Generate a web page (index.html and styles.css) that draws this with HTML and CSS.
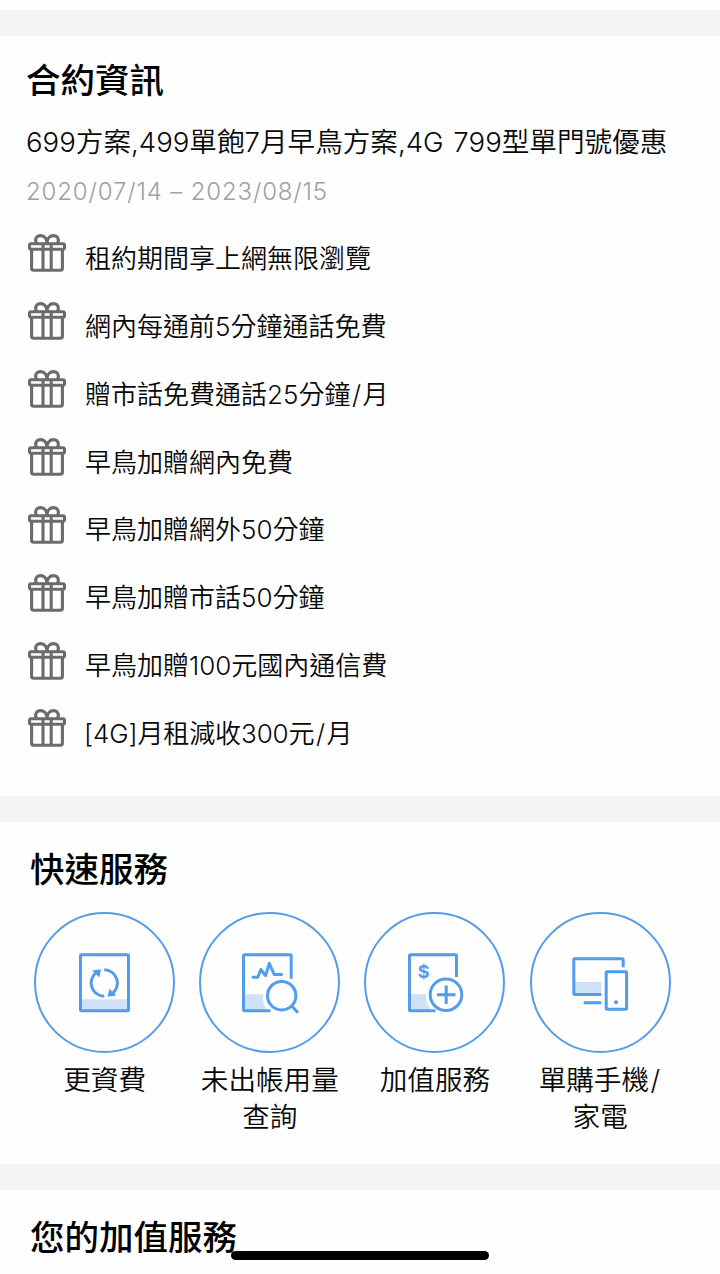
FILE: index.html
```
<!DOCTYPE html>
<html lang="zh-Hant">
<head>
<meta charset="utf-8">
<title>合約資訊</title>
<link rel="stylesheet" href="styles.css">
</head>
<body>
<svg class="defs" width="0" height="0" aria-hidden="true">
  <symbol id="gift" viewBox="0 0 38 38">
    <g fill="none" stroke="#6b6b6b" stroke-width="3.1" stroke-linejoin="round" stroke-linecap="round">
      <rect x="1.5" y="9.7" width="35" height="5.6" rx="1.6"/>
      <path d="M3.6 15.5V34.2Q3.6 36.2 5.6 36.2H32.4Q34.4 36.2 34.4 34.2V15.5M15 10V36M23.2 10V36"/>
      <path d="M8.4 9.2C6.2 4.8 9 1.6 12.8 1.6C16.8 1.6 18.8 5.2 19 9.4C19.2 5.2 21.2 1.6 25.2 1.6C29 1.6 31.8 4.8 29.6 9.2"/>
    </g>
  </symbol>
</svg>
<main class="page">
  <section class="contract">
    <h2 class="title">合約資訊</h2>
    <p class="plan">699方案,499單飽7月早鳥方案,4G <span class="price">799型單門號優惠</span></p>
    <p class="period">2020/07/14 – 2023/08/15</p>
    <ul class="benefits">
      <li class="benefit"><svg class="gift"><use href="#gift"/></svg><span>租約期間享上網無限瀏覽</span></li>
      <li class="benefit"><svg class="gift"><use href="#gift"/></svg><span>網內每通前5分鐘通話免費</span></li>
      <li class="benefit"><svg class="gift"><use href="#gift"/></svg><span>贈市話免費通話25分鐘<span class="slash">/</span>月</span></li>
      <li class="benefit"><svg class="gift"><use href="#gift"/></svg><span>早鳥加贈網內免費</span></li>
      <li class="benefit"><svg class="gift"><use href="#gift"/></svg><span>早鳥加贈網外50分鐘</span></li>
      <li class="benefit"><svg class="gift"><use href="#gift"/></svg><span>早鳥加贈市話50分鐘</span></li>
      <li class="benefit"><svg class="gift"><use href="#gift"/></svg><span>早鳥加贈100元國內通信費</span></li>
      <li class="benefit"><svg class="gift"><use href="#gift"/></svg><span class="rebate">[4G]月租減收300元<span class="slash">/</span>月</span></li>
    </ul>
  </section>
  <section class="quick">
    <h2 class="title">快速服務</h2>
    <div class="services">
      <a class="service">
        <svg class="round" viewBox="0 0 141 141">
          <circle class="ring" cx="70.5" cy="70.5" r="69.5"/>
          <path class="tint" d="M47 87.3H94V98H47Z"/>
          <rect class="line" x="46.5" y="42.8" width="48" height="56" rx="1"/>
          <path class="line" d="M70.3 57.8A13.2 13.2 0 0 1 78 81.7M70.3 84.2A13.2 13.2 0 0 1 62.6 60.3"/>
          <path class="solid" d="M73.6 84.8L75.4 76.8L82.4 83.6ZM67 57.2L65.4 65.4L58.2 58.4Z"/>
        </svg>
        <span class="label">更資費</span>
      </a>
      <a class="service">
        <svg class="round" viewBox="0 0 141 141">
          <circle class="ring" cx="70.5" cy="70.5" r="69.5"/>
          <path class="tint" d="M45 82.3H64.2A18.5 18.5 0 0 0 68 97.5H45Z"/>
          <path class="line" d="M92.2 66.7V43.8Q92.2 42.8 91.2 42.8H45.5Q44.5 42.8 44.5 43.8V97.8Q44.5 98.8 45.5 98.8H71.5"/>
          <path class="line cap" d="M54 65.3H58.7L61.9 57.5L66.6 63.6L70.3 51.5L75.2 62.4H82.5"/>
          <circle class="line" cx="82.7" cy="83.7" r="14.2"/>
          <path class="line" d="M92.6 94L99 100.6"/>
        </svg>
        <span class="label">未出帳用量<br>查詢</span>
      </a>
      <a class="service">
        <svg class="round" viewBox="0 0 141 141">
          <circle class="ring" cx="70.5" cy="70.5" r="69.5"/>
          <path class="tint" d="M46 82.3H62A20 20 0 0 0 67 97.5H46Z"/>
          <path class="line" d="M92.5 65V43.8Q92.5 42.8 91.5 42.8H46.5Q45.5 42.8 45.5 43.8V97.8Q45.5 98.8 46.5 98.8H71.5"/>
          <text class="dollar" x="59.7" y="66.2">$</text>
          <circle class="line" cx="82" cy="82.7" r="15.8"/>
          <path class="line" d="M73 82.7H91.5M82.2 73.4V92"/>
        </svg>
        <span class="label">加值服務</span>
      </a>
      <a class="service">
        <svg class="round" viewBox="0 0 141 141">
          <circle class="ring" cx="70.5" cy="70.5" r="69.5"/>
          <path class="tint" d="M44 70H71.3V82H44Z"/>
          <path class="line" d="M93.2 55.3V47.8Q93.2 46.8 92.2 46.8H44.8Q43.8 46.8 43.8 47.8V81.5Q43.8 82.5 44.8 82.5H71.3M53.7 90.8H71.3"/>
          <rect class="line" x="76.2" y="59.8" width="20.4" height="37.4" rx=".8"/>
          <circle class="solid" cx="86" cy="90.3" r="2"/>
        </svg>
        <span class="label">單購手機<span class="slash">/</span><br>家電</span>
      </a>
    </div>
  </section>
  <section class="addons">
    <h2 class="title">您的加值服務</h2>
  </section>
</main>
<div class="home-indicator"></div>
</body>
</html>
```

FILE: styles.css
```
* { box-sizing: border-box; margin: 0; padding: 0; }
html { overflow: hidden; }
body {
  width: 720px;
  height: 1274px;
  overflow: hidden;
  background: #fefefe;
  color: #080808;
  font-family: Inter, "Noto Sans CJK TC", sans-serif;
  font-weight: 350;
}
.defs { position: absolute; }
.page {
  height: 1274px;
  padding-top: 10px;
  overflow: hidden;
}
section { border-top: 26px solid #f4f4f4; }
.title {
  font-size: 34.5px;
  line-height: 48px;
  font-weight: 500;
  color: #000;
}
.contract { height: 786px; padding: 21px 26px 0; }
.plan {
  margin-top: 17px;
  font-size: 27.6px;
  line-height: 40px;
  white-space: nowrap;
}
.price { margin-left: 2px; }
.period {
  margin-top: 15px;
  font-size: 24px;
  line-height: 30px;
  letter-spacing: .85px;
  color: #a0a0a0;
}
.benefits { margin-top: 17px; list-style: none; }
.benefit {
  display: flex;
  align-items: center;
  gap: 19px;
  height: 67.86px;
  font-size: 26px;
  line-height: 38px;
  padding-left: 2px;
  white-space: nowrap;
}
.benefit > span { margin-top: 2px; }
.rebate { margin-left: -1px; letter-spacing: -.1px; }
.gift { width: 38px; height: 38px; margin-bottom: 9px; }
.slash { padding: 0 1.5px; }
.quick { height: 368px; padding: 24px 30px 0; }
.services {
  display: grid;
  grid-template-columns: repeat(4, 165.2px);
  margin: 18px 0 0 -8px;
}
.service { display: flex; flex-direction: column; align-items: center; }
.round { width: 141px; height: 141px; }
.label {
  margin-top: 9px;
  font-size: 27.6px;
  line-height: 36.5px;
  text-align: center;
  white-space: nowrap;
}
.ring { fill: none; stroke: #529cec; stroke-width: 2; }
.line { fill: none; stroke: #529cec; stroke-width: 3; stroke-linejoin: round; }
.cap { stroke-linecap: round; }
.tint { fill: #cfe1f7; }
.solid { fill: #529cec; }
.dollar {
  fill: #529cec;
  font: 700 18px Inter, sans-serif;
  text-anchor: middle;
}
.addons { padding: 24px 30px 0; }
.home-indicator {
  position: absolute;
  left: 231px;
  top: 1251px;
  width: 258px;
  height: 9px;
  border-radius: 5px;
  background: #000;
}
```
